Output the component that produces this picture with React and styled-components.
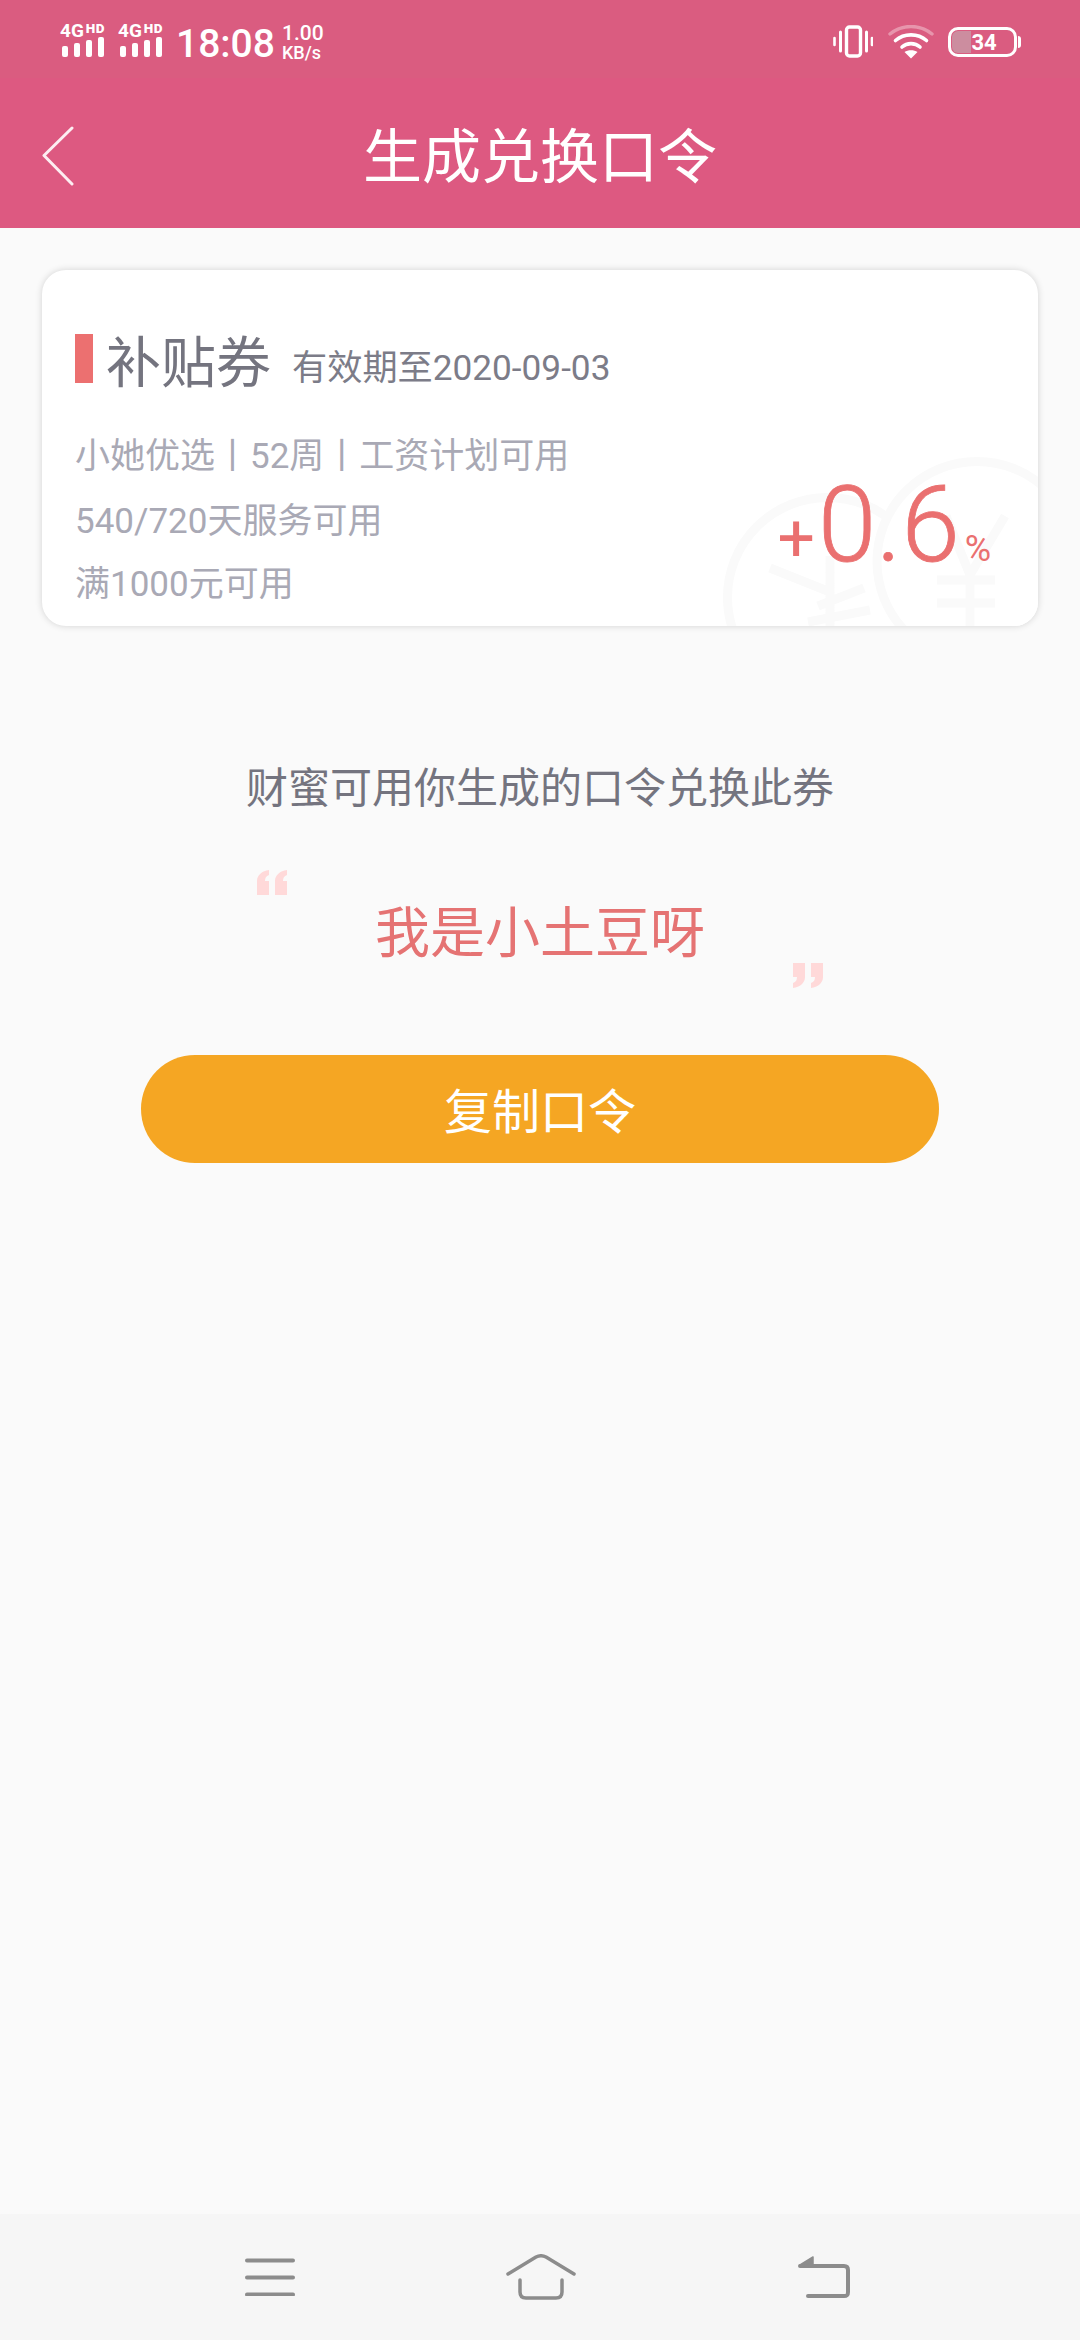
import React from 'react';
import styled, { createGlobalStyle } from 'styled-components';

const GlobalStyle = createGlobalStyle`
  html, body { margin: 0; padding: 0; background: #fafafa; }
  * { box-sizing: border-box; }
  body { font-family: Roboto, "Noto Sans CJK SC", sans-serif; }
`;

const Page = styled.div`
  width: 1080px;
  height: 2340px;
  display: flex;
  flex-direction: column;
  background: #fafafa;
  overflow: hidden;
`;

const Header = styled.header`
  background: #dd5981;
  color: #fff;
`;

const StatusBar = styled.div`
  height: 78px;
  padding: 23px 60px 0 60px;
  display: flex;
  justify-content: space-between;
  align-items: flex-start;
  background: #da5c80;
`;

const StatusGroup = styled.div`
  display: flex;
  align-items: flex-start;
`;

const Sim = styled.div`
  width: 46px;
  margin-right: 12px;
`;

const SimLabel = styled.div`
  display: flex;
  height: 14px;
  font-size: 19px;
  line-height: 15px;
  font-weight: 700;
`;

const HdLabel = styled.span`
  font-size: 13.5px;
  line-height: 10px;
  font-weight: 900;
  letter-spacing: 0.5px;
  margin-left: 2px;
`;

const SignalBars = styled.div`
  display: flex;
  align-items: flex-end;
  gap: 6px;
  height: 20px;
  padding-left: 2px;
`;

const SignalBar = styled.i`
  display: block;
  width: 6px;
  height: ${(props) => props.$h}px;
  border-radius: 2px;
  background: #fff;
`;

const Clock = styled.div`
  font-size: 39px;
  line-height: 34px;
  margin-top: 4px;
  font-weight: 500;
  margin-right: 7px;
`;

const Speed = styled.div`
  display: flex;
  flex-direction: column;
  font-weight: 500;
  margin-top: 0;
`;

const SpeedValue = styled.span`
  font-size: 21px;
  line-height: 20px;
`;

const SpeedUnit = styled.span`
  font-size: 18px;
  line-height: 17px;
  margin-top: 1px;
`;

const StatusIcon = styled.svg`
  display: block;
  margin-top: 2px;
  margin-right: ${(props) => props.$gap || 0}px;
`;

const Battery = styled.div`
  position: relative;
  width: 69px;
  height: 30px;
  margin-top: 4px;
  margin-right: 3px;
  border: 3px solid #fff;
  border-radius: 10px;
  display: flex;
  align-items: center;
  justify-content: center;
  font-size: 22px;
  font-weight: 700;
  &::before {
    content: '';
    position: absolute;
    left: 1px;
    top: 1px;
    bottom: 1px;
    width: 19px;
    border-radius: 6px 0 0 6px;
    background: rgba(190, 190, 190, 0.5);
  }
  &::after {
    content: '';
    position: absolute;
    right: -7px;
    top: 6px;
    width: 3px;
    height: 12px;
    border-radius: 0 3px 3px 0;
    background: #fff;
  }
`;

const BatteryValue = styled.span`
  position: relative;
  margin-left: 3px;
`;

const Toolbar = styled.div`
  height: 150px;
  position: relative;
  display: flex;
  align-items: center;
  justify-content: center;
`;

const BackButton = styled.svg`
  position: absolute;
  left: 42px;
  top: 48px;
`;

const Title = styled.h1`
  margin: 0;
  font: 400 59px/70px "Noto Sans CJK SC", sans-serif;
`;

const Main = styled.main`
  flex: 1;
  padding: 42px 42px 0;
  display: flex;
  flex-direction: column;
  align-items: center;
`;

const Card = styled.section`
  position: relative;
  width: 996px;
  height: 356px;
  padding: 63px 47px 0 33px;
  background: #fff;
  border-radius: 24px;
  box-shadow: 0 0 7px rgba(0, 0, 0, 0.16);
  overflow: hidden;
`;

const Watermark = styled.svg`
  position: absolute;
  right: 0;
  bottom: 0;
`;

const CardHead = styled.div`
  position: relative;
  display: flex;
  align-items: center;
  height: 50px;
`;

const Mark = styled.i`
  display: block;
  width: 18px;
  height: 49px;
  margin-right: 13px;
  background: #ec7070;
`;

const CouponName = styled.span`
  font: 400 55px/50px "Noto Sans CJK SC", sans-serif;
  color: #74747f;
  margin-right: 21px;
`;

const Expire = styled.span`
  font-size: 35.2px;
  line-height: 50px;
  margin-top: 20px;
  color: #7c7c88;
`;

const CardBody = styled.div`
  position: relative;
  display: flex;
  justify-content: space-between;
  align-items: flex-start;
  margin-top: 49px;
`;

const Rules = styled.div`
  color: #a9a9b5;
  font-size: 35px;
  font-weight: 400;
`;

const Rule = styled.div`
  height: ${(props) => props.$h}px;
  line-height: 50px;
`;

const Rate = styled.div`
  display: flex;
  align-items: baseline;
  color: #ea7070;
  font-weight: 300;
  margin-top: 49px;
`;

const RateSign = styled.span`
  font-size: 66px;
  font-weight: 400;
  line-height: 90px;
  margin-right: 3px;
`;

const RateValue = styled.span`
  font-size: 105px;
  line-height: 90px;
  -webkit-text-stroke: 0.8px #ea7070;
`;

const RateUnit = styled.span`
  font-size: 36px;
  font-weight: 400;
  line-height: 90px;
  margin-left: 5px;
`;

const Prompt = styled.p`
  margin: 129px 0 0;
  font: 400 42px/60px "Noto Sans CJK SC", sans-serif;
  color: #74747f;
`;

const Phrase = styled.div`
  position: relative;
  width: 566px;
  height: 118px;
  margin-top: 55px;
  padding-bottom: 3px;
  display: flex;
  align-items: center;
  justify-content: center;
  font: 400 55px/70px "Noto Sans CJK SC", sans-serif;
  color: #e57373;
`;

const Quote = styled.svg`
  position: absolute;
  left: ${(props) => (props.$end ? 'auto' : '0')};
  right: ${(props) => (props.$end ? '0' : 'auto')};
  top: ${(props) => (props.$end ? 'auto' : '0')};
  bottom: ${(props) => (props.$end ? '0' : 'auto')};
  transform: ${(props) => (props.$end ? 'rotate(180deg)' : 'none')};
`;

const CopyButton = styled.button`
  width: 798px;
  height: 108px;
  margin-top: 67px;
  padding-bottom: 3px;
  border: 0;
  border-radius: 54px;
  background: #f5a623;
  color: #fff;
  font: 400 48px/60px "Noto Sans CJK SC", sans-serif;
`;

const NavBar = styled.nav`
  height: 126px;
  padding-left: 245px;
  display: grid;
  grid-template-columns: 261px 292px 52px;
  align-items: center;
  background: #f6f6f6;
`;

const NavIcon = styled.svg`
  display: block;
  fill: none;
  stroke: #8c8c8c;
  stroke-width: ${(props) => props.$stroke || 4};
  stroke-linecap: round;
  stroke-linejoin: round;
`;

const quotePath = 'M0 25V11C0 5 5 1 12 0V5C9 6 8 8 8 11H12V25ZM18 25V11C18 5 23 1 30 0V5C27 6 26 8 26 11H30V25Z';

export default function App() {
  return (
    <Page>
      <GlobalStyle />
      <Header>
        <StatusBar>
          <StatusGroup>
            {[0, 1].map((sim) => (
              <Sim key={sim}>
                <SimLabel>4G<HdLabel>HD</HdLabel></SimLabel>
                <SignalBars>
                  {[11, 14, 17, 20].map((h) => <SignalBar key={h} $h={h} />)}
                </SignalBars>
              </Sim>
            ))}
            <Clock>18:08</Clock>
            <Speed>
              <SpeedValue>1.00</SpeedValue>
              <SpeedUnit>KB/s</SpeedUnit>
            </Speed>
          </StatusGroup>
          <StatusGroup>
            <StatusIcon $gap={15} width="40" height="34" viewBox="0 0 40 34" fill="none" stroke="#fff" strokeLinecap="round">
              <rect x="13.5" y="2" width="14" height="29" rx="3" strokeWidth="3.4" />
              <path d="M7.5 7v19M33.5 7v19" strokeWidth="3" />
              <path d="M1.5 13v7M39 13v7" strokeWidth="2.6" />
            </StatusIcon>
            <StatusIcon $gap={14} width="46" height="34" viewBox="0 0 46 34" fill="none" strokeLinecap="round">
              <path d="M2 9C14 -1 32 -1 44 9" stroke="rgba(255,255,255,.35)" strokeWidth="3.4" />
              <path d="M7.5 15.5C16 8 30 8 38.5 15.5" stroke="#fff" strokeWidth="3.6" />
              <path d="M14 22C19 17.5 27 17.5 32 22" stroke="#fff" strokeWidth="3.6" />
              <path d="M16.5 27C20 24.5 26 24.5 29.500 27L23 33.500Z" fill="#fff" />
            </StatusIcon>
            <Battery><BatteryValue>34</BatteryValue></Battery>
          </StatusGroup>
        </StatusBar>
        <Toolbar>
          <BackButton width="32" height="60" viewBox="0 0 32 60" fill="none" stroke="#fdeef2" strokeWidth="3" strokeLinecap="round" strokeLinejoin="round">
            <path d="M30 2L2 29.500L30 58" />
          </BackButton>
          <Title>生成兑换口令</Title>
        </Toolbar>
      </Header>
      <Main>
        <Card>
          <Watermark width="320" height="180" viewBox="0 0 320 180" fill="none" stroke="#fafafa" strokeWidth="9">
            <circle cx="109.500" cy="151.500" r="100" />
            <path d="M52 122L112 146M112 110V180M100 160L146 142M90 176L152 164" />
            <circle cx="259" cy="115.500" r="100" fill="#fff" />
            <path d="M287 70L252 129L228 70M219 134H277M219 157H277M252 129V180" />
          </Watermark>
          <CardHead>
            <Mark />
            <CouponName>补贴券</CouponName>
            <Expire>有效期至2020-09-03</Expire>
          </CardHead>
          <CardBody>
            <Rules>
              <Rule $h={65}>小她优选丨52周丨工资计划可用</Rule>
              <Rule $h={63}>540/720天服务可用</Rule>
              <Rule $h={50}>满1000元可用</Rule>
            </Rules>
            <Rate>
              <RateSign>+</RateSign>
              <RateValue>0.6</RateValue>
              <RateUnit>%</RateUnit>
            </Rate>
          </CardBody>
        </Card>
        <Prompt>财蜜可用你生成的口令兑换此券</Prompt>
        <Phrase>
          <Quote width="30" height="25" viewBox="0 0 30 25" fill="#ffd9d9"><path d={quotePath} /></Quote>
          我是小土豆呀
          <Quote $end width="30" height="25" viewBox="0 0 30 25" fill="#ffd9d9"><path d={quotePath} /></Quote>
        </Phrase>
        <CopyButton>复制口令</CopyButton>
      </Main>
      <NavBar>
        <NavIcon width="50" height="38" viewBox="0 0 50 38">
          <path d="M2 2.500H48M2 19.500H48M2 36.500H48" />
        </NavIcon>
        <NavIcon $stroke={3.5} width="70" height="46" viewBox="0 0 70 46">
          <path d="M2 20L30 3C33 1.500 37 1.500 40 3L68 20" />
          <path d="M14 26V38C14 42 16 44 20 44H50C54 44 56 42 56 38V26" />
        </NavIcon>
        <NavIcon width="52" height="42" viewBox="0 0 52 42">
          <path d="M2 10H46C49 10 50 12 50 14V36C50 39 49 40 46 40H10" />
          <path d="M2 9L15 1V10Z" fill="#8c8c8c" strokeWidth="1.500" />
        </NavIcon>
      </NavBar>
    </Page>
  );
}
